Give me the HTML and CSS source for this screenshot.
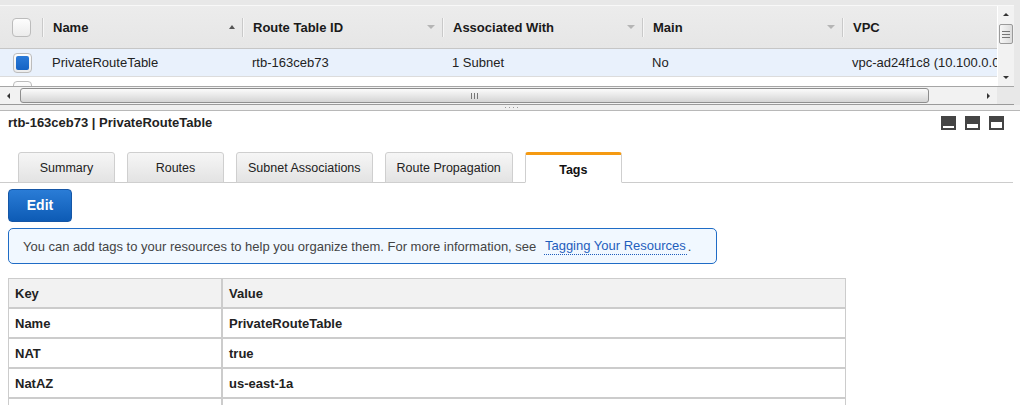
FILE: index.html
```html
<!DOCTYPE html>
<html>
<head>
<meta charset="utf-8">
<link rel="stylesheet" href="styles.css">
</head>
<body>
<div class="grid">
  <div class="grid-inner">
    <div class="grid-body">
      <div class="grid-main">
        <div class="thead">
          <div class="c-check"><span class="cb"></span></div>
          <div class="hcell"><span class="sep"></span><span class="hlabel">Name</span><span class="arrow-up"></span></div>
          <div class="hcell"><span class="sep"></span><span class="hlabel">Route Table ID</span><span class="arrow-down"></span></div>
          <div class="hcell"><span class="sep"></span><span class="hlabel">Associated With</span><span class="arrow-down"></span></div>
          <div class="hcell"><span class="sep"></span><span class="hlabel">Main</span><span class="arrow-down"></span></div>
          <div class="hcell hcell-last"><span class="sep"></span><span class="hlabel">VPC</span></div>
        </div>
        <div class="trow sel">
          <div class="c-check"><span class="cb cb-row"><span class="cb-fill"></span></span></div>
          <div class="cell">PrivateRouteTable</div>
          <div class="cell">rtb-163ceb73</div>
          <div class="cell">1 Subnet</div>
          <div class="cell">No</div>
          <div class="cell cell-last">vpc-ad24f1c8 (10.100.0.0/16)</div>
        </div>
        <div class="trow">
          <div class="c-check"><span class="cb cb-row"></span></div>
          <div class="cell"></div>
          <div class="cell">rtb-146cd7b4</div>
          <div class="cell">1 Subnet</div>
          <div class="cell">No</div>
          <div class="cell cell-last">vpc-ad24f1c8 (10.100.0.0/16)</div>
        </div>
      </div>
      <div class="vscroll">
        <div class="sb-btn"><span class="tri-up"></span></div>
        <div class="vthumb"><span class="grip-h"></span><span class="grip-h"></span><span class="grip-h"></span></div>
        <div class="sb-fill"></div>
        <div class="sb-btn"><span class="tri-down"></span></div>
      </div>
    </div>
    <div class="hscroll">
      <div class="hs-main">
        <div class="sb-btn"><span class="tri-left"></span></div>
        <div class="hthumb"><span class="grip-v"></span><span class="grip-v"></span><span class="grip-v"></span></div>
        <div class="sb-fill"></div>
        <div class="sb-btn"><span class="tri-right"></span></div>
      </div>
      <div class="corner"></div>
    </div>
  </div>
  <div class="splitter"><span class="dots"></span></div>
</div>

<div class="detail">
  <div class="title-row">
    <div class="title">rtb-163ceb73 | PrivateRouteTable</div>
    <div class="pane-icons">
      <span class="pi"><span class="bar b1"></span></span>
      <span class="pi"><span class="bar b2"></span></span>
      <span class="pi"><span class="bar b3"></span></span>
    </div>
  </div>
  <div class="tabs">
    <div class="tab">Summary</div>
    <div class="tab">Routes</div>
    <div class="tab">Subnet Associations</div>
    <div class="tab">Route Propagation</div>
    <div class="tab active">Tags</div>
  </div>
  <div class="content">
    <button class="btn-edit">Edit</button>
    <div class="info">You can add tags to your resources to help you organize them. For more information, see <a class="link">Tagging Your Resources</a>.</div>
    <table class="tags">
      <tr><th class="kcol">Key</th><th>Value</th></tr>
      <tr><td>Name</td><td>PrivateRouteTable</td></tr>
      <tr><td>NAT</td><td>true</td></tr>
      <tr><td>NatAZ</td><td>us-east-1a</td></tr>
      <tr><td>&nbsp;</td><td>&nbsp;</td></tr>
    </table>
  </div>
</div>
</body>
</html>
```

FILE: styles.css
```css
html, body {
  margin: 0;
  padding: 0;
  background: #fff;
  font-family: "Liberation Sans", Arial, sans-serif;
  color: #222;
  overflow: hidden;
}

.grid {
  background: #e8e8e8;
  padding-top: 5px;
  padding-right: 6px;
}
.grid-inner {
  border-top: 1px solid #f8f8f8;
}
.grid-body {
  display: flex;
  height: 80px;
}
.grid-main {
  flex: 1;
  overflow: hidden;
  background: #fff;
}
.thead {
  display: flex;
  align-items: center;
  height: 42px;
  background: linear-gradient(#ececec, #e6e6e6);
  border-bottom: 1px solid #c6c6c6;
  font-weight: bold;
  font-size: 13px;
  color: #1a1a1a;
}
.c-check {
  width: 42px;
  flex-shrink: 0;
  display: flex;
  align-items: center;
  padding-left: 12px;
  box-sizing: border-box;
}
.cb {
  width: 19px;
  height: 19px;
  box-sizing: border-box;
  border: 1px solid #bcbcbc;
  border-radius: 4px;
  background: linear-gradient(#fdfdfd, #ececec);
  display: flex;
  align-items: center;
  justify-content: center;
}
.cb-row {
  margin-left: 1px;
  height: 20px;
}
.cb-fill {
  width: 13px;
  height: 14px;
  border-radius: 2px;
  background: linear-gradient(#2a7ad8, #1563c4);
}
.hcell {
  width: 200px;
  flex-shrink: 0;
  display: flex;
  align-items: center;
}
.hcell-last {
  width: 160px;
}
.sep {
  width: 1px;
  height: 19px;
  background: #c9c9c9;
  box-shadow: 1px 0 0 #f6f6f6;
  margin-right: 10px;
}
.hlabel {
  white-space: nowrap;
}
.arrow-up {
  margin-left: auto;
  margin-right: 7px;
  width: 0;
  height: 0;
  border-left: 3px solid transparent;
  border-right: 3px solid transparent;
  border-bottom: 4px solid #555;
}
.arrow-down {
  margin-left: auto;
  margin-right: 7px;
  width: 0;
  height: 0;
  border-left: 4px solid transparent;
  border-right: 4px solid transparent;
  border-top: 4px solid #b5b5b5;
}
.trow {
  display: flex;
  align-items: center;
  height: 27px;
  border-bottom: 1px solid #dcdcdc;
  font-size: 13px;
  color: #222;
  background: #fff;
}
.trow.sel {
  background: #e9f1fc;
}
.cell {
  width: 200px;
  flex-shrink: 0;
  padding-left: 10px;
  box-sizing: border-box;
  white-space: nowrap;
}
.cell-last {
  width: 160px;
  overflow: hidden;
}

/* scrollbars */
.vscroll {
  width: 17px;
  display: flex;
  flex-direction: column;
  background: #f2f2f2;
  border-left: 1px solid #fff;
  box-sizing: border-box;
}
.sb-btn {
  width: 17px;
  height: 17px;
  flex-shrink: 0;
  display: flex;
  align-items: center;
  justify-content: center;
}
.vscroll .sb-btn {
  width: 16px;
}
.sb-fill {
  flex: 1;
}
.tri-up {
  width: 0; height: 0;
  border-left: 3px solid transparent;
  border-right: 3px solid transparent;
  border-bottom: 3px solid #333;
}
.tri-down {
  width: 0; height: 0;
  border-left: 3px solid transparent;
  border-right: 3px solid transparent;
  border-top: 3px solid #333;
}
.tri-left {
  width: 0; height: 0;
  border-top: 3px solid transparent;
  border-bottom: 3px solid transparent;
  border-right: 3px solid #333;
}
.tri-right {
  width: 0; height: 0;
  border-top: 3px solid transparent;
  border-bottom: 3px solid transparent;
  border-left: 3px solid #333;
}
.vthumb {
  height: 18px;
  margin: 1px 1px 0 1px;
  border: 1px solid #9a9a9a;
  border-radius: 2px;
  background: linear-gradient(90deg, #f6f6f6, #dcdcdc);
  display: flex;
  flex-direction: column;
  align-items: center;
  justify-content: center;
  gap: 2px;
}
.grip-h {
  width: 8px;
  height: 1px;
  background: #777;
}
.hscroll {
  display: flex;
  height: 17px;
  border-top: 1px solid #a6a6a6;
  border-bottom: 1px solid #9a9a9a;
}
.hs-main {
  flex: 1;
  display: flex;
  align-items: center;
  background: #f2f2f2;
}
.hthumb {
  width: 907px;
  height: 13px;
  margin-left: 3px;
  border: 1px solid #8e8e8e;
  border-radius: 3px;
  background: linear-gradient(#fbfbfb, #e8e8e8 50%, #d4d4d4);
  display: flex;
  align-items: center;
  justify-content: center;
  gap: 2px;
}
.grip-v {
  width: 1px;
  height: 6px;
  background: #777;
}
.corner {
  width: 17px;
  background: #e8e8e8;
}
.splitter {
  height: 5px;
  background: #efefef;
  border-bottom: 1px solid #b8b8b8;
  display: flex;
  align-items: center;
  justify-content: center;
  margin-right: -6px;
}
.dots {
  width: 15px;
  height: 1px;
  background: repeating-linear-gradient(90deg, #999 0 1px, transparent 1px 4px);
  margin-left: 4px;
}

/* detail pane */
.detail {
  margin-right: 7px;
}
.title-row {
  box-sizing: border-box;
  height: 41px;
  padding: 5px 9px 0 8px;
  display: flex;
  justify-content: space-between;
  align-items: flex-start;
}
.title {
  font-weight: bold;
  font-size: 13px;
  line-height: 15px;
  margin-top: -1px;
  color: #222;
}
.pane-icons {
  display: flex;
  gap: 9px;
}
.pi {
  width: 15px;
  height: 14px;
  box-sizing: border-box;
  background: #444;
  display: flex;
  align-items: flex-end;
  justify-content: center;
  padding-bottom: 2px;
}
.bar {
  width: 11px;
  background: #fff;
}
.b1 { height: 2px; }
.b2 { height: 4px; }
.b3 { height: 6px; }

.tabs {
  display: flex;
  gap: 12px;
  padding-left: 18px;
  height: 30px;
  border-bottom: 1px solid #cccccc;
}
.tab {
  box-sizing: border-box;
  height: 31px;
  min-width: 97px;
  padding: 0 11px;
  border: 1px solid #cfcfcf;
  border-radius: 3px 3px 0 0;
  background: linear-gradient(#f6f6f6, #e3e3e3);
  font-size: 12.5px;
  color: #222;
  display: flex;
  align-items: center;
  justify-content: center;
  margin-bottom: -1px;
}
.tab.active {
  background: #fff;
  border-top: 3px solid #f59a12;
  border-bottom: 1px solid #fff;
  font-weight: bold;
  font-size: 12.5px;
  color: #111;
  padding-top: 2px;
}

.content {
  padding-left: 8px;
  padding-top: 6px;
}
.btn-edit {
  display: block;
  width: 64px;
  height: 33px;
  border: 1px solid #1556a6;
  border-radius: 4px;
  background: linear-gradient(#2a7cd6, #0d5bb5);
  color: #fff;
  font-family: "Liberation Sans", Arial, sans-serif;
  font-weight: bold;
  font-size: 14px;
  padding: 0 0 1px 0;
}
.info {
  box-sizing: border-box;
  margin-top: 6px;
  width: 709px;
  height: 36px;
  border: 1px solid #1f6cc6;
  border-radius: 5px;
  background: #f1f8ff;
  font-size: 13px;
  color: #444;
  display: flex;
  align-items: center;
  padding-left: 14px;
  white-space: pre;
}
.link {
  color: #1f5ebd;
  border-bottom: 1px dotted #1f5ebd;
  padding: 0 1px 1px 1px;
  margin-left: 4px;
  margin-right: 1px;
}
.tags {
  margin-top: 14px;
  width: 838px;
  border-collapse: separate;
  border-spacing: 0;
  font-size: 13px;
  font-weight: bold;
  color: #222;
}
.tags th, .tags td {
  height: 30px;
  box-sizing: border-box;
  border: 1px solid #cccccc;
  padding: 0 0 0 6px;
  text-align: left;
}
.tags th {
  background: #f2f2f2;
}
.tags .kcol {
  width: 214px;
}
```
